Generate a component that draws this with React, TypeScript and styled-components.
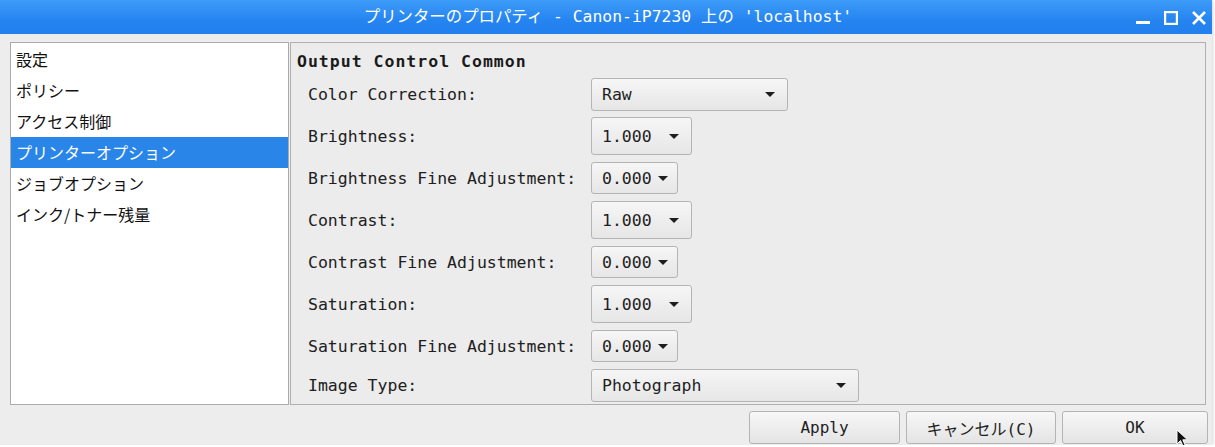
import React from "react";
import styled, { createGlobalStyle } from "styled-components";

const MONO = `"DejaVu Sans Mono", "Noto Sans CJK JP", monospace`;
const CJK = `"Noto Sans CJK JP", "Noto Sans", sans-serif`;

type Row = {
  label: string;
  value: string;
  width: number;
  height: number;
  tight?: boolean;
};

const rows: Row[] = [
  { label: "Color Correction:", value: "Raw", width: 197, height: 33 },
  { label: "Brightness:", value: "1.000", width: 101, height: 38 },
  { label: "Brightness Fine Adjustment:", value: "0.000", width: 87, height: 32, tight: true },
  { label: "Contrast:", value: "1.000", width: 101, height: 38 },
  { label: "Contrast Fine Adjustment:", value: "0.000", width: 87, height: 32, tight: true },
  { label: "Saturation:", value: "1.000", width: 101, height: 38 },
  { label: "Saturation Fine Adjustment:", value: "0.000", width: 87, height: 32, tight: true },
  { label: "Image Type:", value: "Photograph", width: 268, height: 33 },
];

const pages = [
  "設定",
  "ポリシー",
  "アクセス制御",
  "プリンターオプション",
  "ジョブオプション",
  "インク/トナー残量",
];

const App: React.FC = () => {
  return (
    <>
      <GlobalStyle />
      <Window>
        <TitleBar>
          <Title>プリンターのプロパティ - Canon-iP7230 上の 'localhost'</Title>
          <Controls>
            <svg width="14" height="14" viewBox="0 0 14 14">
              <rect x="0" y="10" width="14" height="3" fill="#fff" />
            </svg>
            <svg width="14" height="14" viewBox="0 0 14 14">
              <rect x="1" y="1" width="12" height="12" fill="none" stroke="#fff" strokeWidth="2.4" />
            </svg>
            <svg width="14" height="14" viewBox="0 0 14 14">
              <path d="M1 1 L13 13 M13 1 L1 13" stroke="#fff" strokeWidth="2.6" />
            </svg>
          </Controls>
        </TitleBar>
        <Body>
          <Panels>
            <PageList>
              {pages.map((p, i) => (
                <PageItem key={p} selected={i === 3}>
                  {p}
                </PageItem>
              ))}
            </PageList>
            <OptionsPanel>
              <Heading>Output Control Common</Heading>
              <Form>
                {rows.map((r) => (
                  <React.Fragment key={r.label}>
                    <Label>{r.label}</Label>
                    <ComboCell>
                      <Combo
                        tight={r.tight}
                        style={{ width: r.width, height: r.height }}
                      >
                        <span>{r.value}</span>
                        <Arrow />
                      </Combo>
                    </ComboCell>
                  </React.Fragment>
                ))}
              </Form>
            </OptionsPanel>
          </Panels>
          <ButtonRow>
            <Button width={151}>Apply</Button>
            <Button width={150}>キャンセル(C)</Button>
            <Button width={146}>OK</Button>
          </ButtonRow>
        </Body>
        <Pointer width="14" height="20" viewBox="0 0 14 20">
          <path d="M1 1 L1 15 L4.5 11.5 L7.5 18 L9.5 17 L6.8 10.8 L11.5 10.8 Z" fill="#111" stroke="#fff" strokeWidth="1" />
        </Pointer>
      </Window>
    </>
  );
};

export default App;

const GlobalStyle = createGlobalStyle`
  html, body {
    margin: 0;
    padding: 0;
    background: #ffffff;
  }
`;

const Window = styled.div`
  position: relative;
  width: 1212px;
  height: 445px;
  background: #ededed;
  box-shadow: 0 0 4px rgba(0, 0, 0, 0.25);
  display: flex;
  flex-direction: column;
  overflow: hidden;
`;

const TitleBar = styled.div`
  height: 34px;
  flex-shrink: 0;
  background: linear-gradient(#3d9cf8, #2684f0 60%, #2280ee);
  display: flex;
  align-items: center;
  padding: 0 6px 0 0;
  box-sizing: border-box;
`;

const Title = styled.div`
  flex: 1;
  text-align: center;
  padding-left: 80px;
  color: #ffffff;
  font-family: ${MONO};
  font-size: 16.4px;
  line-height: 34px;
  white-space: pre;
`;

const Controls = styled.div`
  display: flex;
  gap: 14px;
  align-items: center;
  padding-top: 2px;
`;

const Body = styled.div`
  flex: 1;
  display: flex;
  flex-direction: column;
  padding: 8px 6px 0 10px;
`;

const Panels = styled.div`
  display: flex;
  height: 363px;
`;

const PageList = styled.div`
  width: 277px;
  background: #ffffff;
  border: 1px solid #ababab;
  display: flex;
  flex-direction: column;
  padding-top: 1px;
`;

const PageItem = styled.div<{ selected: boolean }>`
  height: 31px;
  line-height: 31px;
  padding-left: 5px;
  font-family: ${CJK};
  font-size: 16px;
  color: ${(p) => (p.selected ? "#ffffff" : "#111111")};
  background: ${(p) => (p.selected ? "#2a85e9" : "transparent")};
`;

const OptionsPanel = styled.div`
  flex: 1;
  border: 1px solid #b0b0b0;
  margin-left: 1px;
  background: #ececec;
  padding: 7px 0 0 6px;
  overflow: hidden;
`;

const Heading = styled.div`
  font-family: ${MONO};
  font-weight: bold;
  font-size: 16.5px;
  letter-spacing: 1px;
  color: #1a1a1a;
  line-height: 24px;
  margin-bottom: -1px;
`;

const Form = styled.div`
  display: grid;
  grid-template-columns: 283px auto;
  grid-template-rows: repeat(7, 42px) 36px;
  padding-left: 11px;
`;

const Label = styled.div`
  display: flex;
  align-items: center;
  font-family: ${MONO};
  font-size: 16.5px;
  color: #202020;
  white-space: pre;
`;

const ComboCell = styled.div`
  display: flex;
  align-items: center;
`;

const Combo = styled.div<{ tight?: boolean }>`
  box-sizing: border-box;
  flex-shrink: 0;
  display: flex;
  align-items: center;
  justify-content: space-between;
  padding: 0 ${(p) => (p.tight ? "9px" : "12px")} 0 10px;
  border: 1px solid #b4b4b4;
  border-radius: 3px;
  background: linear-gradient(#f6f6f6, #e6e6e6);
  font-family: ${MONO};
  font-size: 16.5px;
  color: #1e1e1e;
`;

const Arrow = styled.span`
  width: 0;
  height: 0;
  border-left: 5px solid transparent;
  border-right: 5px solid transparent;
  border-top: 5px solid #1e1e1e;
  margin-top: 1px;
`;

const ButtonRow = styled.div`
  display: flex;
  justify-content: flex-end;
  gap: 6px;
  padding-top: 6px;
  margin-right: -2px;
`;

const Button = styled.div<{ width: number }>`
  box-sizing: border-box;
  width: ${(p) => p.width}px;
  height: 33px;
  display: flex;
  align-items: center;
  justify-content: center;
  border: 1px solid #b4b4b4;
  border-radius: 3px;
  background: linear-gradient(#f7f7f7, #e4e4e4);
  font-family: ${MONO};
  font-size: 16px;
  color: #1e1e1e;
`;

const Pointer = styled.svg`
  position: absolute;
  left: 1176px;
  top: 429px;
`;
